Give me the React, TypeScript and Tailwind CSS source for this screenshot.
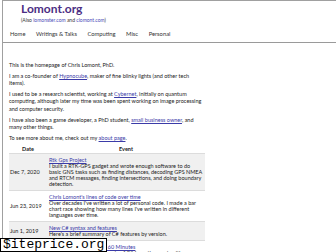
const link = "text-[#3b3ba8] underline";

const rows = [
  {
    date: "Dec 7, 2020",
    title: "Rtk Gps Project",
    text: "I built a RTK-GPS gadget and wrote enough software to do basic GNS tasks such as finding distances, decoding GPS NMEA and RTCM messages, finding intersections, and doing boundary detection.",
  },
  {
    date: "Jun 23, 2019",
    title: "Chris Lomont's lines of code over time",
    text: "Over decades I've written a lot of personal code. I made a bar chart race showing how many lines I've written in different languages over time.",
  },
  {
    date: "Jun 1, 2019",
    title: "New C# syntax and features",
    text: "Here's a brief summary of C# features by version.",
  },
  {
    date: "May 4, 2019",
    title: "C# Programming Tips in 60 Minutes",
    text: "A fast walk through the parts of C# I use the most, with examples.",
  },
];

export default function App() {
  return (
    <div className="relative w-[336px] h-[252px] overflow-hidden bg-white font-['Lato',sans-serif] text-[#222]">
      <div className="ml-[2px] h-full border-l border-t border-[#a0a0a0]">
        {/* Header */}
        <header className="border-b border-[#9a9a9a] pb-[4px]">
          <div className="pl-[18px] pt-[1px] text-[12px] font-bold leading-[14px] text-[#4b2e83]">
            Lomont.org
          </div>
          <div className="pl-[18px] mt-[1px] text-[5px] leading-[6px] text-[#333]">
            (Also <span className="text-[#4a4ab8]">lomonster.com</span> and{" "}
            <span className="text-[#4a4ab8]">clomont.com</span>)
          </div>
          <nav className="mt-[7px] flex gap-[10.5px] pl-[7px] text-[5.8px] leading-[8px] text-[#333]">
            <span>Home</span>
            <span>Writings &amp; Talks</span>
            <span>Computing</span>
            <span>Misc</span>
            <span>Personal</span>
          </nav>
        </header>

        {/* Content */}
        <main className="w-[202px] pl-[6px] pt-[19px] text-[5.5px] leading-[7.6px]">
          <p>This is the homepage of Chris Lomont, PhD.</p>
          <p className="mt-[3px]">
            I am a co-founder of <span className={link}>Hypnocube</span>, maker of fine blinky lights (and
            other tech items).
          </p>
          <p className="mt-[3px]">
            I used to be a research scientist, working at <span className={link}>Cybernet</span>, initially
            on quantum computing, although later my time was been spent working on image processing and
            computer security.
          </p>
          <p className="mt-[3px]">
            I have also been a game developer, a PhD student,{" "}
            <span className={link}>small business owner</span>, and many other things.
          </p>
          <p className="mt-[3px]">
            To see more about me, check out my <span className={link}>about page</span>.
          </p>

          <table className="mt-[3px] w-full border-collapse leading-[6px]">
            <thead>
              <tr className="font-bold">
                <th className="w-[38px] py-[1px] text-center">Date</th>
                <th className="py-[1px] text-center">Event</th>
              </tr>
            </thead>
            <tbody>
              {rows.map((r, i) => (
                <tr
                  key={r.date}
                  className={`border-t border-[#dcdcdc] ${i % 2 === 0 ? "bg-[#f0f0f0]" : "bg-white"}`}
                >
                  <td className="align-middle whitespace-nowrap pl-[1px] pr-[2px]">{r.date}</td>
                  <td className="pl-[2px] pr-[2px] py-[3px]">
                    <span className={link}>{r.title}</span>
                    <br />
                    {r.text}
                  </td>
                </tr>
              ))}
            </tbody>
          </table>
        </main>
      </div>

      {/* siteprice watermark */}
      <div className="absolute left-0 bottom-0 border border-black bg-white px-[2px] font-['Liberation_Mono',monospace] text-[13px] leading-[12px] text-black">
        $iteprice.org
      </div>
    </div>
  );
}
